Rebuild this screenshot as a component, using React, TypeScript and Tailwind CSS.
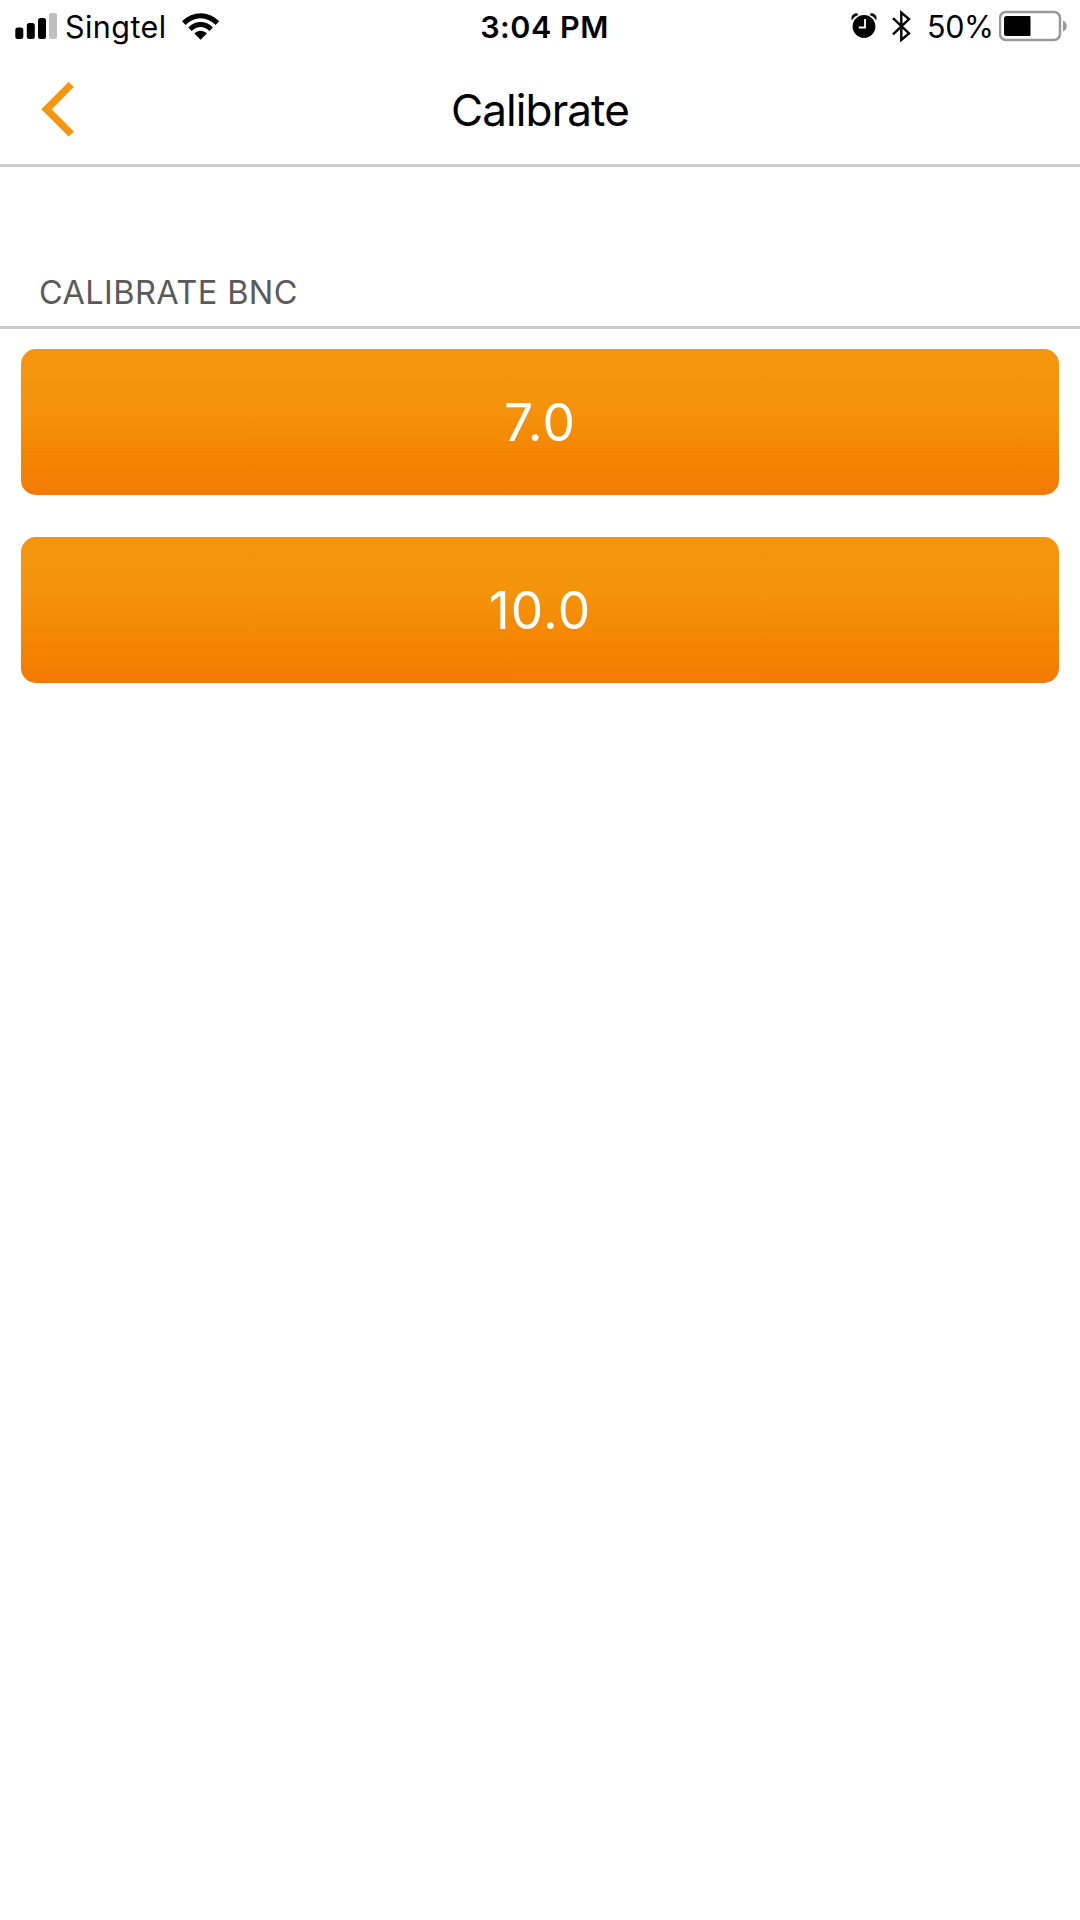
function StatusBar() {
  return (
    <div className="grid h-[54px] grid-cols-[1fr_auto_1fr] text-[30.5px] leading-[54px] text-black">
      <div className="flex pl-[15px]">
        <svg width="43" height="54" viewBox="15 0 43 54" className="shrink-0">
          <rect x="15.3" y="27.6" width="8" height="11.4" rx="2.5" />
          <rect x="26.8" y="23" width="8" height="16" rx="2.5" />
          <rect x="38" y="18" width="8" height="21" rx="2.5" />
          <rect x="49" y="13" width="8" height="26" rx="2.5" fill="#bfbfbf" />
        </svg>
        <span className="ml-[7px] w-[101px] whitespace-nowrap tracking-[0.45px]">Singtel</span>
        <svg width="40" height="54" viewBox="180 0 40 54" className="ml-[14px] shrink-0">
          <path d="M182 21.3C193 10.4 208.500 10.4 219.200 21.3L215.600 24.900C206.500 16 194.500 16 185.600 24.900Z" />
          <path d="M188.300 27.500C195.500 20.300 205.800 20.300 212.900 27.500L209.500 31C204 25.700 197.200 25.700 191.700 31Z" />
          <path d="M194.400 33.600C198 29.800 203.300 29.800 206.800 33.600L200.600 39.700Z" />
        </svg>
      </div>
      <span className="translate-x-[4.500px] whitespace-nowrap font-semibold tracking-[0.5px]">3:04 PM</span>
      <div className="flex justify-end pr-[12px]">
        <svg width="26" height="54" viewBox="851 0 26 54" className="shrink-0">
          <circle cx="864" cy="26.500" r="11.400" />
          <path d="M857.200 13.700C853.200 13.500 851.300 15.800 852 19.600C853.300 17.300 855.200 15.500 857.800 14.900Z" stroke="black" strokeWidth="0.800" />
          <path d="M870.800 13.700C874.800 13.500 876.700 15.800 876 19.600C874.700 17.300 872.800 15.500 870.200 14.900Z" stroke="black" strokeWidth="0.800" />
          <path d="M865 19V27.500H858.800" fill="none" stroke="white" strokeWidth="1.800" />
        </svg>
        <svg width="20" height="54" viewBox="892 0 20 54" className="ml-[15px] shrink-0">
          <path d="M893 18.200L909 33.500L901.300 40V12.500L909 19L893 34.300" fill="none" stroke="black" strokeWidth="2.400" />
        </svg>
        <span className="ml-[15px] w-[65px] whitespace-nowrap tracking-[-0.4px]">50%</span>
        <svg width="69" height="54" viewBox="999 0 69 54" className="ml-[7px] shrink-0">
          <rect x="1000" y="12" width="60" height="28" rx="6" fill="none" stroke="#999" strokeWidth="2.500" />
          <rect x="1004" y="16" width="26.300" height="20" rx="2.500" />
          <rect x="1027" y="16" width="3.300" height="20" />
          <path d="M1063 20.500C1068 22.500 1068 29.500 1063 31.500Z" fill="#999" />
        </svg>
      </div>
    </div>
  );
}

function CalibrateButton({ label }: { label: string }) {
  return (
    <button className="block h-[146px] w-full rounded-[15px] bg-[linear-gradient(180deg,#f4950d_0%,#f4940c_35%,#f58400_76%,#f47a09_100%)] text-center text-[51.5px] leading-[146px] tracking-[1.1px] text-white">
      {label}
    </button>
  );
}

export default function App() {
  return (
    <div className="min-h-[1920px] w-[1080px] bg-white font-['Inter',sans-serif]">
      <StatusBar />
      <header className="grid h-[113px] grid-cols-[1fr_auto_1fr] border-b-[3px] border-[#cccccc]">
        <button aria-label="Back" className="pl-[40px] text-left">
          <svg width="36" height="56" viewBox="40 81 36 56" className="-mt-[3px]">
            <path d="M71.200 84.500L46.500 109.300L71.200 134" fill="none" stroke="#f5960e" strokeWidth="7.300" />
          </svg>
        </button>
        <h1 className="text-[44px] leading-[113px] tracking-[-0.9px] text-black">Calibrate</h1>
      </header>
      <main>
        <h2 className="flex h-[162px] items-end border-b-[3px] border-[#cccccc] pb-[13px] pl-[39px] text-[32.5px] leading-[40px] tracking-[0.4px] text-[#5a5a5a]">
          CALIBRATE BNC
        </h2>
        <div className="flex flex-col gap-[42px] px-[21px] pt-[20px]">
          <CalibrateButton label="7.0" />
          <CalibrateButton label="10.0" />
        </div>
      </main>
    </div>
  );
}
